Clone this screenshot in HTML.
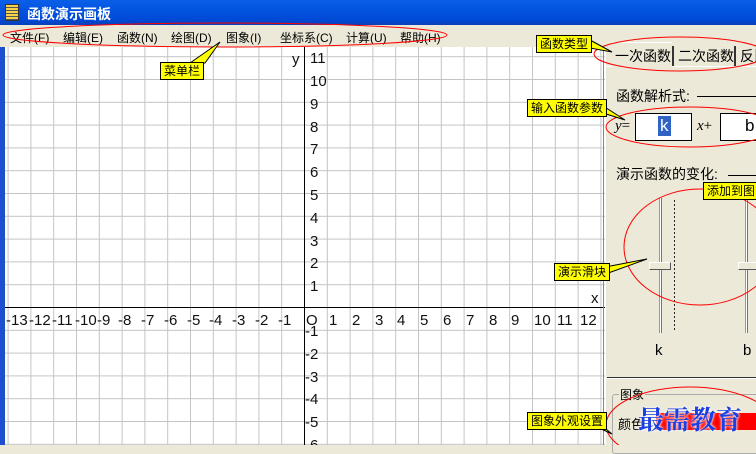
<!DOCTYPE html>
<html><head><meta charset="utf-8"><style>
*{margin:0;padding:0;box-sizing:border-box}
body{width:756px;height:445px;overflow:hidden;position:relative;background:#ECE9D8;font-family:"Liberation Sans","Noto Sans CJK SC",sans-serif}
.a{position:absolute;white-space:nowrap}
.title{left:0;top:0;width:756px;height:25px;background:linear-gradient(#0A5FE8,#0254E0 40%,#0049D6 80%,#0A3FB8);}
.menu{font-size:12px;top:29px;color:#000}
.call{background:#FFFF00;border:1px solid #000;font-size:12px;padding:0 3px;line-height:16px;height:18px}
.tab{font-size:14px;top:46px}
</style></head><body>
<div class="a title"></div>
<div class="a" style="left:5px;top:4px;width:14px;height:17px;background:repeating-linear-gradient(#F6D24A 0 2px,#555 2px 3px);border:1px solid #333"></div>
<div class="a" style="left:27px;top:4px;color:#fff;font-weight:bold;font-size:14px">函数演示画板</div>
<div class="a menu" style="left:10px">文件(F)</div>
<div class="a menu" style="left:63px">编辑(E)</div>
<div class="a menu" style="left:117px">函数(N)</div>
<div class="a menu" style="left:171px">绘图(D)</div>
<div class="a menu" style="left:226px">图象(I)</div>
<div class="a menu" style="left:280px">坐标系(C)</div>
<div class="a menu" style="left:346px">计算(U)</div>
<div class="a menu" style="left:400px">帮助(H)</div>
<div class="a" style="left:0;top:47px;width:5px;height:398px;background:#1E4FD0"></div>
<svg class="a" style="left:5px;top:47px" width="600" height="398" viewBox="5 47 600 398">
<defs><pattern id="g" x="304" y="307" width="22.8" height="22.8" patternUnits="userSpaceOnUse"><path d="M0.5 0V22.8M0 0.5H22.8" stroke="#C4C4C4" fill="none"/></pattern></defs>
<rect x="5" y="47" width="600" height="398" fill="#fff"/>
<rect x="5" y="47" width="600" height="398" fill="url(#g)"/>
<line x1="5" y1="307.5" x2="605" y2="307.5" stroke="#000"/>
<line x1="304.5" y1="47" x2="304.5" y2="445" stroke="#000"/>
<line x1="603.5" y1="47" x2="603.5" y2="445" stroke="#888"/>
<g font-family="Liberation Sans,sans-serif" font-size="15" fill="#111">
<text x="292" y="64">y</text><text x="591" y="303">x</text>
<g>
<text x="310" y="63">11</text><text x="310" y="86">10</text><text x="310" y="109">9</text><text x="310" y="132">8</text><text x="310" y="154">7</text><text x="310" y="177">6</text><text x="310" y="200">5</text><text x="310" y="223">4</text><text x="310" y="246">3</text><text x="310" y="268">2</text><text x="310" y="291">1</text>
<text x="305" y="336">-1</text><text x="305" y="359">-2</text><text x="305" y="382">-3</text><text x="305" y="404">-4</text><text x="305" y="427">-5</text><text x="305" y="450">-6</text>
</g>
<g>
<text x="306" y="325">O</text>
<text x="329" y="325">1</text><text x="352" y="325">2</text><text x="375" y="325">3</text><text x="397" y="325">4</text><text x="420" y="325">5</text><text x="443" y="325">6</text><text x="466" y="325">7</text><text x="489" y="325">8</text><text x="511" y="325">9</text><text x="534" y="325">10</text><text x="557" y="325">11</text><text x="580" y="325">12</text>
<text x="278" y="325">-1</text><text x="255" y="325">-2</text><text x="232" y="325">-3</text><text x="209" y="325">-4</text><text x="187" y="325">-5</text><text x="164" y="325">-6</text><text x="141" y="325">-7</text><text x="118" y="325">-8</text><text x="97" y="325">-9</text><text x="75" y="325">-10</text><text x="52" y="325">-11</text><text x="29" y="325">-12</text><text x="6" y="325">-13</text>
</g></g>
</svg>
<div class="a" style="left:604px;top:66px;width:152px;height:1px;background:#fff"></div>
<div class="a" style="left:605px;top:47px;width:1px;height:398px;background:#fff"></div>
<div class="a" style="left:612px;top:42px;width:60px;height:25px;background:#ECE9D8;border-top:1px solid #fff"></div>
<div class="a tab" style="left:615px">一次函数</div>
<div class="a" style="left:672px;top:46px;width:2px;height:20px;background:#333"></div>
<div class="a tab" style="left:678px">二次函数</div>
<div class="a" style="left:734px;top:46px;width:2px;height:20px;background:#333"></div>
<div class="a tab" style="left:740px">反比</div>
<div class="a" style="left:616px;top:86px;font-size:14px">函数解析式:</div>
<div class="a" style="left:697px;top:96px;width:60px;height:1px;background:#000"></div>
<div class="a" style="left:615px;top:118px;font-size:15px;font-family:'Liberation Serif',serif;font-style:italic">y<span style="font-style:normal">=</span></div>
<div class="a" style="left:635px;top:113px;width:57px;height:28px;background:#fff;border:1px solid #000"></div>
<div class="a" style="left:658px;top:116px;background:#3163C5;color:#fff;font-size:17px;line-height:20px;padding:0 2px">k</div>
<div class="a" style="left:697px;top:118px;font-size:15px;font-family:'Liberation Serif',serif"><i>x</i>+</div>
<div class="a" style="left:720px;top:113px;width:40px;height:28px;background:#fff;border:1px solid #000"></div>
<div class="a" style="left:745px;top:116px;font-size:17px">b</div>
<div class="a" style="left:616px;top:164px;font-size:14px">演示函数的变化:</div>
<div class="a" style="left:728px;top:175px;width:30px;height:1px;background:#000"></div>
<div class="a" style="left:659px;top:198px;width:3px;height:135px;background:#fff;border-left:1px solid #999;border-right:1px solid #777"></div>
<div class="a" style="left:674px;top:200px;width:1px;height:130px;background:repeating-linear-gradient(#222 0 2px,transparent 2px 4px)"></div>
<div class="a" style="left:649px;top:262px;width:22px;height:8px;background:#ECE9D8;border:1px solid;border-color:#fff #555 #555 #fff"></div>
<div class="a" style="left:745px;top:198px;width:3px;height:135px;background:#fff;border-left:1px solid #999;border-right:1px solid #777"></div>
<div class="a" style="left:738px;top:262px;width:22px;height:8px;background:#ECE9D8;border:1px solid;border-color:#fff #555 #555 #fff"></div>
<div class="a" style="left:655px;top:342px;font-size:15px">k</div>
<div class="a" style="left:743px;top:342px;font-size:15px">b</div>
<div class="a" style="left:607px;top:377px;width:150px;height:2px;background:#333;border-bottom:1px solid #fff"></div>
<div class="a" style="left:612px;top:394px;width:150px;height:60px;border:1px solid #aaa;border-radius:3px"></div>
<div class="a" style="left:619px;top:386px;font-size:12px;background:#ECE9D8;padding:0 1px">图象</div>
<div class="a" style="left:618px;top:414px;font-size:13px">颜色</div>
<div class="a" style="left:656px;top:413px;width:100px;height:17px;background:#f00"></div>
<div class="a" style="left:638px;top:404px;font-size:26px;line-height:30px;font-weight:bold;color:#1B3FE0;font-family:'Noto Serif CJK SC',serif;text-shadow:0 0 2px #fff,0 0 3px #fff">最需教育</div>
<svg class="a" style="left:0;top:0" width="756" height="445">
<g fill="none" stroke="#f00" stroke-width="1">
<ellipse cx="225" cy="35" rx="222" ry="12"/>
<ellipse cx="680" cy="54" rx="86" ry="17"/>
<ellipse cx="690" cy="127" rx="84" ry="20"/>
<ellipse cx="700" cy="247" rx="76" ry="58"/>
<ellipse cx="690" cy="425" rx="84" ry="38"/>
</g>
<g fill="#FFFF00" stroke="#000">
<polygon points="190,63 220,42 205,63"/>
<polygon points="590,40 612,52 590,48"/>
<polygon points="600,104 625,120 600,112"/>
<polygon points="600,268 647,259 600,276"/>
<polygon points="595,420 612,434 595,426"/>
</g>
</svg>
<div class="a call" style="left:160px;top:62px">菜单栏</div>
<div class="a call" style="left:536px;top:35px">函数类型</div>
<div class="a call" style="left:527px;top:99px">输入函数参数</div>
<div class="a call" style="left:703px;top:182px">添加到图象</div>
<div class="a call" style="left:554px;top:263px">演示滑块</div>
<div class="a call" style="left:527px;top:412px">图象外观设置</div>
</body></html>
